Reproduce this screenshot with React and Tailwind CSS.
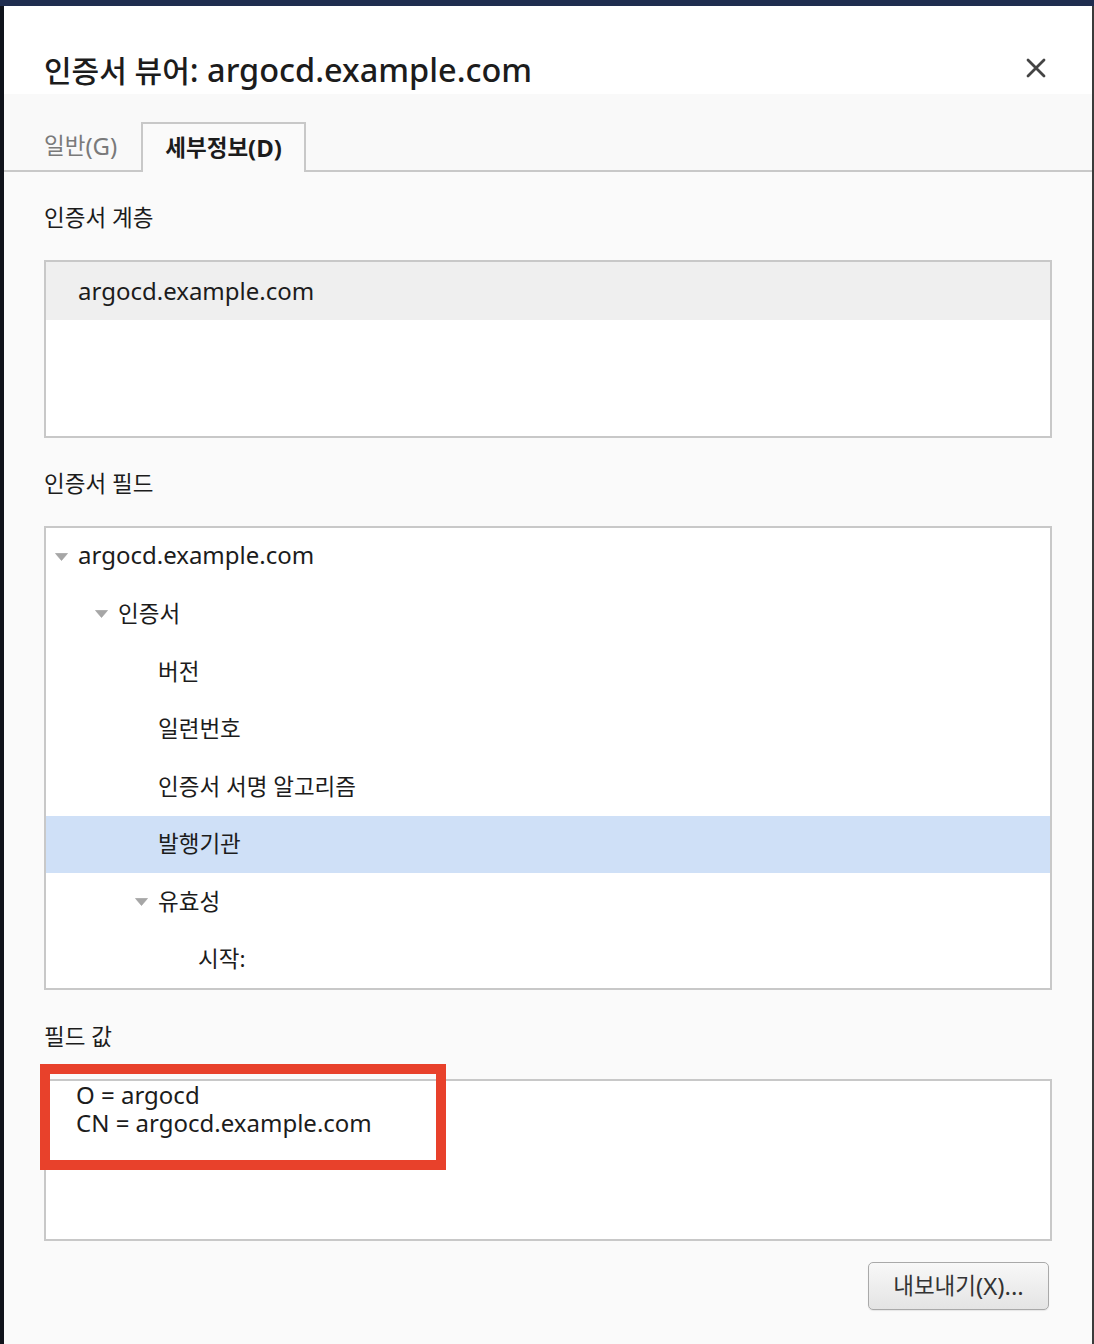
import React from "react";

const fields = [
    { label: "argocd.example.com", level: 0, open: true, latin: true },
    { label: "인증서", level: 1, open: true },
    { label: "버전", level: 2 },
    { label: "일련번호", level: 2 },
    { label: "인증서 서명 알고리즘", level: 2 },
    { label: "발행기관", level: 2, selected: true },
    { label: "유효성", level: 2, open: true },
    { label: "시작:", level: 3 },
];

const indent = ["pl-[9px]", "pl-[49px]", "pl-[89px]", "pl-[129px]"];

const Ko = ({ children, className = "" }) => <span className={`text-[22.5px] ${className}`}>{children}</span>;

const Caret = ({ show }) => (
    <span className="mr-[10px] flex w-[13px] justify-center">
        {show && (
            <svg width="13" height="8" viewBox="0 0 13 8">
                <polygon points="0.5,0.5 12.5,0.5 6.5,7.5" fill="#a6a6a6" stroke="#9a9a9a" strokeWidth="0.6" />
            </svg>
        )}
    </span>
);

const CloseIcon = () => (
    <svg width="20" height="20" viewBox="0 0 20 20">
        <path d="M2 2 L18 18 M18 2 L2 18" stroke="#444" strokeWidth="2.8" strokeLinecap="round" />
    </svg>
);

export default function App() {
    return (
        <div className="flex h-[1344px] w-[1094px] flex-col overflow-hidden bg-[#141824] font-['Noto_Sans','Noto_Sans_CJK_KR',sans-serif] text-[24px] text-[#1c1c1c]">
            <div className="h-[6px] bg-[#1f2d4f]" />
            <div className="flex flex-1">
                <div className="w-[4px] bg-[#10131b]" />
                <div className="flex w-[1088px] flex-col bg-[#fafafa]">
                    {/* header */}
                    <div className="flex h-[88px] items-start justify-between bg-white pl-[40px] pr-[46px]">
                        <h1 className="mt-[46px] leading-[36px] font-medium">
                            <span className="text-[30px]">인증서 뷰어</span>
                            <span className="text-[32.5px]">: argocd.example.com</span>
                        </h1>
                        <div className="mt-[52px]">
                            <CloseIcon />
                        </div>
                    </div>

                    {/* tabs */}
                    <div className="flex h-[78px] items-end border-b-2 border-[#c8c8c8] bg-[#f9f9f9] pl-[40px]">
                        <div className="flex h-[48px] items-center pr-[24px] text-[#7a7a7a]">
                            <Ko>일반</Ko>(G)
                        </div>
                        <div className="mb-[-2px] flex h-[50px] items-center border-2 border-b-0 border-[#c8c8c8] bg-[#fafafa] px-[22px] font-bold">
                            <Ko>세부정보</Ko>(D)
                        </div>
                    </div>

                    {/* content */}
                    <div className="flex flex-col px-[40px]">
                        <div className="mt-[32px] text-[22.5px] leading-[28px]">인증서 계층</div>
                        <div className="mt-[28px] h-[178px] border-2 border-[#c8c8c8] bg-white">
                            <div className="flex h-[58px] items-center bg-[#efefef] pl-[32px]">argocd.example.com</div>
                        </div>

                        <div className="mt-[32px] text-[22.5px] leading-[28px]">인증서 필드</div>
                        <div className="mt-[28px] h-[464px] border-2 border-[#c8c8c8] bg-white">
                            {fields.map((f) => (
                                <div
                                    key={f.label}
                                    className={`flex h-[57.5px] items-center ${indent[f.level]} ${f.selected ? "bg-[#cfe0f7]" : ""}`}
                                >
                                    <Caret show={f.open} />
                                    <span className={f.latin ? "mt-[-3px]" : "text-[22.5px]"}>{f.label}</span>
                                </div>
                            ))}
                        </div>

                        <div className="mt-[33px] text-[22.5px] leading-[28px]">필드 값</div>
                        <div className="relative mt-[28px] h-[162px] border-2 border-[#c8c8c8] bg-white pl-[30px] leading-[28px]">
                            <div>O = argocd</div>
                            <div>CN = argocd.example.com</div>
                            {/* highlight annotation */}
                            <div className="absolute left-[-6px] top-[-17px] h-[106px] w-[406px] border-[10px] border-[#e8412b]" />
                        </div>

                        <button className="mr-[3px] mt-[21px] flex h-[48px] w-[181px] items-center justify-center self-end rounded-[5px] border border-[#a9a9a9] bg-linear-to-b from-[#f8f8f8] to-[#e4e4e4] text-[#333] shadow-[0_1px_1px_rgba(0,0,0,0.08)]">
                            <Ko>내보내기</Ko>(X)...
                        </button>
                    </div>
                </div>
                <div className="w-[2px] bg-[#3b3b3b]" />
            </div>
        </div>
    );
}
